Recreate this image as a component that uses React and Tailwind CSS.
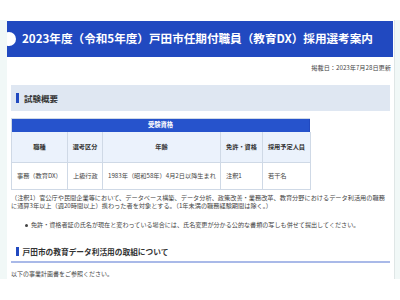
export default function App() {
  const cols = ["職種", "選考区分", "年齢", "免許・資格", "採用予定人員"]
  const row = ["事務（教育DX）", "上級行政", "1983年（昭和58年）4月2日以降生まれ", "注釈1", "若干名"]

  return (
    <div className="w-[400px] h-[300px] bg-white overflow-hidden text-[#333] font-['Noto_Sans_CJK_JP','Noto_Sans',sans-serif]">
      <div className="mt-[20px] h-[259px] bg-[#f1f8f7] pl-[7px] pr-[5px]">
        <div className="h-full bg-white border-r border-[#dfe6e6] pt-px">
          {/* タイトル */}
          <div className="relative overflow-hidden h-[36px] mr-[1px] bg-[#2149c0] flex items-center pl-[15px]">
            <span className="absolute left-[-5px] top-[11px] w-[14px] h-[14px] rounded-full bg-white" />
            <h1 className="text-white font-bold text-[11.6px] leading-none whitespace-nowrap">
              2023年度（令和5年度）戸田市任期付職員（教育DX）採用選考案内
            </h1>
          </div>

          <p className="mt-[7px] pr-[3px] text-right text-[6.2px] leading-[8px] text-[#444]">掲載日：2023年7月28日更新</p>

          <div className="px-[4px]">
            {/* 試験概要 */}
            <div className="mt-[13px] h-[26px] bg-[#dfe7f2] flex items-center pl-[5px] gap-[5px]">
              <span className="w-[3px] h-[10px] bg-[#2149c0]" />
              <h2 className="font-bold text-[8.5px] leading-none">試験概要</h2>
            </div>

            {/* 表 */}
            <div className="mt-[7px] w-[299px] border-l border-t border-[#cfd9e6]">
              <div className="h-[13px] bg-[#2653cc] border-r border-[#2149c0] flex items-center justify-center text-white font-bold text-[6.3px] leading-none">
                受験資格
              </div>
              <div className="grid grid-cols-[56px_35px_118px_42px_48px]">
                {cols.map((c) => (
                  <div key={c} className="h-[31px] bg-[#ebf2fc] border-r border-b border-[#cfd9e6] flex items-center justify-center font-bold text-[6.2px] leading-none whitespace-nowrap">
                    {c}
                  </div>
                ))}
                {row.map((v) => (
                  <div key={v} className="h-[27px] border-r border-b border-[#cfd9e6] flex items-center px-[5px] text-[6.2px] leading-none whitespace-nowrap text-[#444]">
                    {v}
                  </div>
                ))}
              </div>
            </div>

            <p className="mt-[4px] text-[6.2px] leading-[7.5px] text-[#444]">
              （注釈1）官公庁や民間企業等において、データベース構築、データ分析、政策改善・業務改革、教育分野におけるデータ利活用の職務に通算3年以上（週20時間以上）携わった者を対象とする。（1年未満の職務経験期間は除く。）
            </p>

            <ul className="mt-[12px] pl-[14px] text-[6.1px] leading-[8px] text-[#444]">
              <li className="flex items-center gap-[3px]">
                <span className="w-[3px] h-[3px] rounded-full bg-[#444]" />
                免許・資格者証の氏名が現在と変わっている場合には、氏名変更が分かる公的な書類の写しも併せて提出してください。
              </li>
            </ul>

            {/* 取組 */}
            <div className="mt-[17px] h-[17px] border-b-2 border-[#a9b9e8] flex items-start pl-[5px] gap-[4px] pt-[1px]">
              <span className="w-[2.5px] h-[9px] bg-[#2149c0]" />
              <h2 className="font-bold text-[7.7px] leading-[9px]">戸田市の教育データ利活用の取組について</h2>
            </div>

            <p className="mt-[7px] text-[6px] leading-[8px] text-[#444]">以下の事業計画書をご参照ください。</p>
          </div>
        </div>
      </div>
    </div>
  )
}
